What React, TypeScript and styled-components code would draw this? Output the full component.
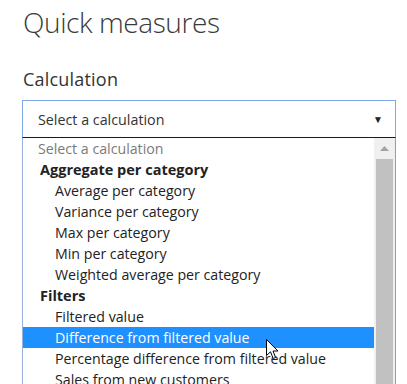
import React from "react";
import styled, { createGlobalStyle } from "styled-components";

const Global = createGlobalStyle`
  html, body { margin: 0; padding: 0; background: #fff; overflow: hidden; }
  body { font-family: "Open Sans", "Noto Sans", sans-serif; }
`;

const Page = styled.div`
  width: 407px;
  height: 384px;
  padding-left: 22px;
  box-sizing: border-box;
  overflow: hidden;
`;

const Title = styled.h1`
  margin: 0;
  padding: 3px 0 0 1px;
  font-size: 28px;
  letter-spacing: -0.4px;
  font-weight: 300;
  line-height: 38px;
  color: #3a3a3a;
`;

const Label = styled.div`
  margin-top: 26px;
  padding-left: 1px;
  font-size: 18px;
  letter-spacing: 0.2px;
  line-height: 24px;
  color: #333;
`;

const Field = styled.div`
  margin-top: 9px;
  width: 374px;
`;

const SelectBox = styled.div`
  height: 38px;
  box-sizing: border-box;
  border: 1px solid #7fa9e6;
  border-bottom-color: #1a1a1a;
  display: flex;
  align-items: center;
  justify-content: space-between;
  padding: 0 12px 0 15px;
  font-size: 14.3px;
  color: #333;
`;

const Arrow = styled.span`
  font-size: 10px;
  color: #222;
`;

const ListBox = styled.div`
  display: flex;
  height: 250px;
  border-left: 1px solid #9bb0d8;
  border-right: 1px solid #7fa0dc;
  box-sizing: border-box;
`;

const Options = styled.div`
  flex: 1;
  display: flex;
  flex-direction: column;
`;

const Option = styled.div<{ $level: number; $selected?: boolean; $placeholder?: boolean; $group?: boolean }>`
  height: 21px;
  flex: none;
  display: flex;
  align-items: center;
  padding-left: ${(p) => (p.$level === 0 ? 15 : p.$level === 1 ? 17 : 32)}px;
  font-size: ${(p) => (p.$group ? 14.5 : 14.2)}px;
  white-space: nowrap;
  font-weight: ${(p) => (p.$group ? 700 : 400)};
  color: ${(p) => (p.$selected ? "#fff" : p.$placeholder ? "#7a7a7a" : "#222")};
  background: ${(p) => (p.$selected ? "#1e90ff" : "transparent")};
  position: relative;
`;

const Scrollbar = styled.div`
  width: 21px;
  background: #f0f0f0;
  display: flex;
  flex-direction: column;
  align-items: center;
`;

const ScrollUp = styled.div`
  height: 21px;
  flex: none;
  display: flex;
  align-items: center;
  justify-content: center;
`;

const Thumb = styled.div`
  width: 17px;
  flex: 1;
  background: #c1c1c1;
  margin-bottom: 1px;
`;

const Cursor = styled.svg`
  position: absolute;
  left: 243px;
  top: 12px;
  z-index: 2;
`;

const items: { text: string; level: number; group?: boolean; placeholder?: boolean; selected?: boolean }[] = [
  { text: "Select a calculation", level: 0, placeholder: true },
  { text: "Aggregate per category", level: 1, group: true },
  { text: "Average per category", level: 2 },
  { text: "Variance per category", level: 2 },
  { text: "Max per category", level: 2 },
  { text: "Min per category", level: 2 },
  { text: "Weighted average per category", level: 2 },
  { text: "Filters", level: 1, group: true },
  { text: "Filtered value", level: 2 },
  { text: "Difference from filtered value", level: 2, selected: true },
  { text: "Percentage difference from filtered value", level: 2 },
  { text: "Sales from new customers", level: 2 },
];

export default function App() {
  return (
    <Page>
      <Global />
      <Title>Quick measures</Title>
      <Label>Calculation</Label>
      <Field>
        <SelectBox>
          <span>Select a calculation</span>
          <Arrow>▼</Arrow>
        </SelectBox>
        <ListBox>
          <Options>
            {items.map((it) => (
              <Option
                key={it.text}
                $level={it.level}
                $group={it.group}
                $placeholder={it.placeholder}
                $selected={it.selected}
              >
                {it.text}
                {it.selected && (
                  <Cursor width="13" height="21" viewBox="0 0 13 21">
                    <path d="M0.5 0.5 L0.5 16.5 L4.5 12.8 L7.2 19.5 L9.6 18.5 L7 12 L12 12 Z" fill="#fff" stroke="#000" strokeWidth="1" strokeLinejoin="miter" />
                  </Cursor>
                )}
              </Option>
            ))}
          </Options>
          <Scrollbar>
            <ScrollUp>
              <svg width="9" height="5" viewBox="0 0 9 5">
                <path d="M0 5 L4.5 0 L9 5 Z" fill="#a3a3a3" />
              </svg>
            </ScrollUp>
            <Thumb />
          </Scrollbar>
        </ListBox>
      </Field>
    </Page>
  );
}
